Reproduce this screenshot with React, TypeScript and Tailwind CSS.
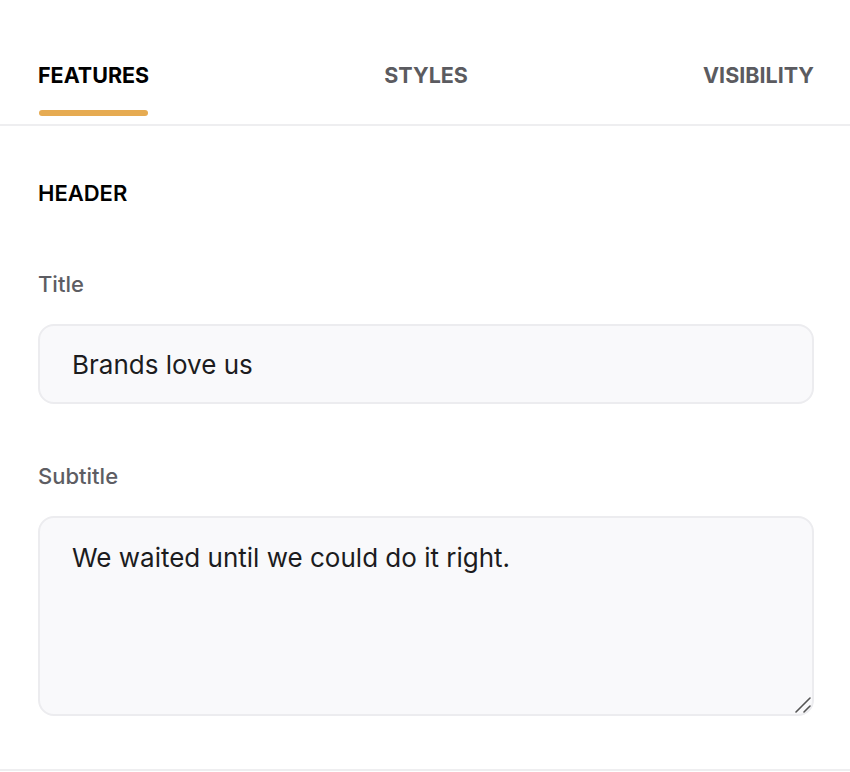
export default function App() {
    return (
        <div className="min-h-screen bg-white" style={{ fontFamily: "Inter, 'Noto Sans', sans-serif" }}>
            {/* Tabs */}
            <div className="flex justify-between border-b-2 border-[#eeeef0] pl-[38px] pr-[36px] pt-[58px]">
                <div className="flex flex-col items-center">
                    <span className="text-[21.5px] font-bold leading-[34px] text-black">FEATURES</span>
                    <span className="mt-[18px] mb-[8px] h-[6px] w-[109px] rounded-full bg-[#e6ab52]" />
                </div>
                <span className="text-[21.5px] font-bold leading-[34px] text-[#5b5b60]">STYLES</span>
                <span className="text-[21.5px] font-bold leading-[34px] text-[#5b5b60]">VISIBILITY</span>
            </div>

            {/* Form */}
            <div className="flex flex-col border-b-2 border-[#eeeef0] pl-[38px] pr-[36px] pt-[50px] pb-[53px]">
                <h2 className="text-[22px] font-semibold leading-[34px] text-black">HEADER</h2>

                <label className="mt-[59px] text-[22px] font-medium leading-[30px] text-[#5d5d63]">Title</label>
                <input
                    defaultValue="Brands love us"
                    className="mt-[25px] h-[80px] w-full rounded-[16px] border-2 border-[#ececef] bg-[#f9f9fb] px-[32px] text-[26px] text-[#1c1c1e] outline-none"
                />

                <label className="mt-[57px] text-[22px] font-medium leading-[30px] text-[#5d5d63]">Subtitle</label>
                <div className="relative mt-[25px]">
                    <textarea
                        defaultValue="We waited until we could do it right."
                        className="block h-[200px] w-full resize-none rounded-[16px] border-2 border-[#ececef] bg-[#f9f9fb] px-[32px] py-[23px] text-[26px] leading-[34px] text-[#1c1c1e] outline-none"
                    />
                    <svg className="pointer-events-none absolute right-[3px] bottom-[3px]" width="16" height="16" viewBox="0 0 16 16">
                        <path d="M1 15 L15 1 M9 15 L15 9" stroke="#555" strokeWidth="1.6" strokeLinecap="round" />
                    </svg>
                </div>
            </div>
        </div>
    );
}
